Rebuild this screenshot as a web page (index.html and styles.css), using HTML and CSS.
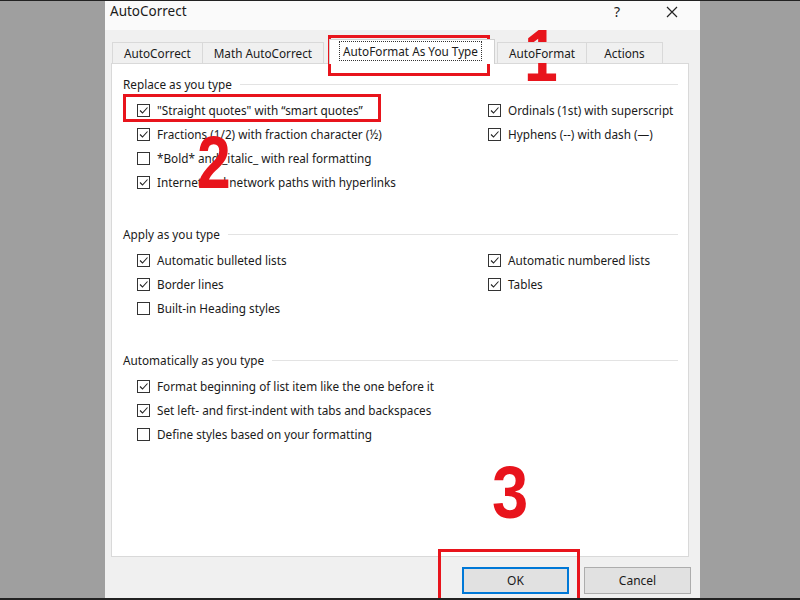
FILE: index.html
```html
<!DOCTYPE html>
<html lang="en">
<head>
    <meta charset="UTF-8">
    <meta name="viewport" content="width=device-width, initial-scale=1.0">
    <title>AutoCorrect</title>
    <link rel="stylesheet" href="styles.css">
</head>
<body>

    <div class="screen">
        <div class="dialog">
            <div class="titlebar">
                <span class="title">AutoCorrect</span>
                <span class="tb-help">?</span>
                <span class="tb-close">
                    <svg width="12" height="12" viewBox="0 0 12 12"><path d="M1 1 L11 11 M11 1 L1 11" stroke="#222" stroke-width="1.2" fill="none"/></svg>
                </span>
            </div>

            <div class="tabs">
                <div class="tab">AutoCorrect</div>
                <div class="tab">Math AutoCorrect</div>
                <div class="tab active"><span class="focus">AutoFormat As You Type</span></div>
                <div class="tab">AutoFormat</div>
                <div class="tab">Actions</div>
            </div>

            <div class="panel">
                <div class="group">
                    <div class="legend"><span>Replace as you type</span></div>
                    <div class="opts">
                        <div class="col">
                            <div class="opt"><span class="cb"><svg viewBox="0 0 11 11"><path d="M2 5.5 L4.5 8 L9.5 2.5"/></svg></span>"Straight quotes" with “smart quotes”</div>
                            <div class="opt"><span class="cb"><svg viewBox="0 0 11 11"><path d="M2 5.5 L4.5 8 L9.5 2.5"/></svg></span>Fractions (1/2) with fraction character (½)</div>
                            <div class="opt"><span class="cb"></span>*Bold* and _italic_ with real formatting</div>
                            <div class="opt"><span class="cb"><svg viewBox="0 0 11 11"><path d="M2 5.5 L4.5 8 L9.5 2.5"/></svg></span>Internet and network paths with hyperlinks</div>
                        </div>
                        <div class="col">
                            <div class="opt"><span class="cb"><svg viewBox="0 0 11 11"><path d="M2 5.5 L4.5 8 L9.5 2.5"/></svg></span>Ordinals (1st) with superscript</div>
                            <div class="opt"><span class="cb"><svg viewBox="0 0 11 11"><path d="M2 5.5 L4.5 8 L9.5 2.5"/></svg></span>Hyphens (--) with dash (—)</div>
                        </div>
                    </div>
                </div>

                <div class="group">
                    <div class="legend"><span>Apply as you type</span></div>
                    <div class="opts">
                        <div class="col">
                            <div class="opt"><span class="cb"><svg viewBox="0 0 11 11"><path d="M2 5.5 L4.5 8 L9.5 2.5"/></svg></span>Automatic bulleted lists</div>
                            <div class="opt"><span class="cb"><svg viewBox="0 0 11 11"><path d="M2 5.5 L4.5 8 L9.5 2.5"/></svg></span>Border lines</div>
                            <div class="opt"><span class="cb"></span>Built-in Heading styles</div>
                        </div>
                        <div class="col">
                            <div class="opt"><span class="cb"><svg viewBox="0 0 11 11"><path d="M2 5.5 L4.5 8 L9.5 2.5"/></svg></span>Automatic numbered lists</div>
                            <div class="opt"><span class="cb"><svg viewBox="0 0 11 11"><path d="M2 5.5 L4.5 8 L9.5 2.5"/></svg></span>Tables</div>
                        </div>
                    </div>
                </div>

                <div class="group">
                    <div class="legend"><span>Automatically as you type</span></div>
                    <div class="opts">
                        <div class="col">
                            <div class="opt"><span class="cb"><svg viewBox="0 0 11 11"><path d="M2 5.5 L4.5 8 L9.5 2.5"/></svg></span>Format beginning of list item like the one before it</div>
                            <div class="opt"><span class="cb"><svg viewBox="0 0 11 11"><path d="M2 5.5 L4.5 8 L9.5 2.5"/></svg></span>Set left- and first-indent with tabs and backspaces</div>
                            <div class="opt"><span class="cb"></span>Define styles based on your formatting</div>
                        </div>
                    </div>
                </div>
            </div>

            <div class="footer">
                <button class="btn btn-ok">OK</button>
                <button class="btn">Cancel</button>
            </div>
        </div>

        <!-- annotation marks -->
        <div class="mark box-1"></div>
        <div class="mark box-2"></div>
        <div class="mark box-3"></div>
        <div class="num num-1">1</div>
        <div class="num num-2">2</div>
        <div class="num num-3">3</div>
    </div>

</body>
</html>
```

FILE: styles.css
```css
body {
    margin: 0;
    background-color: #9f9f9f;
    font-family: "Noto Sans", "Open Sans", sans-serif;
    font-size: 11.75px;
    color: #1a1a1a;
}
.screen {
    position: relative;
    width: 800px;
    height: 600px;
    overflow: hidden;
    border-top: 1px solid #222;
    border-bottom: 2px solid #222;
    box-sizing: border-box;
}
.dialog {
    width: 595px;
    height: 100%;
    margin-left: 105px;
    background: #f0f0f0;
    display: flex;
    flex-direction: column;
}
.titlebar {
    height: 29px;
    background: #fafafa;
    display: flex;
    align-items: center;
    padding-left: 5px;
}
.title {
    font-size: 13.5px;
    flex: 1;
    margin-top: -9px;
}
.tb-help {
    font-size: 14px;
    margin-top: -9px;
    margin-right: 46px;
}
.tb-close {
    height: 12px;
    margin-top: -9px;
    margin-right: 22px;
}
.tabs {
    display: flex;
    align-items: flex-end;
    height: 33px;
    padding-left: 7px;
    position: relative;
    z-index: 1;
}
.tab {
    height: 21px;
    line-height: 20px;
    padding: 0 11px;
    min-width: 77px;
    text-align: center;
    border: 1px solid #d9d9d9;
    border-bottom: none;
    margin-right: -1px;
    box-sizing: border-box;
    background: #f0f0f0;
}
.tab.active {
    height: 25px;
    line-height: 22px;
    background: #fff;
    padding: 0 12px 0 9px;
    margin: 0 2px -1px 6px;
    border-color: #d0d0d0;
}
.focus {
    border: 1px dotted #333;
    padding: 1px 3px;
}
.panel {
    height: 494px;
    margin-left: 6px;
    width: 578px;
    background: #fff;
    border: 1px solid #d9d9d9;
    box-sizing: border-box;
    padding: 12px 10px 0 11px;
}
.group {
    margin-bottom: 32px;
}
.legend {
    display: flex;
    align-items: center;
    height: 16px;
    margin-bottom: 6px;
}
.legend::after {
    content: "";
    flex: 1;
    border-top: 1px solid #e3e3e3;
    margin-left: 8px;
}
.opts {
    display: grid;
    grid-template-columns: 351px 1fr;
    padding-left: 14px;
}
.opt {
    height: 24px;
    display: flex;
    align-items: center;
    white-space: nowrap;
}
.cb {
    width: 13px;
    height: 13px;
    border: 1px solid #333;
    box-sizing: border-box;
    margin-right: 7px;
    background: #fff;
    flex-shrink: 0;
}
.cb svg {
    display: block;
    width: 11px;
    height: 11px;
    fill: none;
    stroke: #222;
    stroke-width: 1.1;
}
.footer {
    display: flex;
    justify-content: flex-end;
    gap: 15px;
    padding: 10px 9px 0 0;
}
.btn {
    width: 107px;
    height: 27px;
    background: #e1e1e1;
    border: 1px solid #adadad;
    font-family: "Noto Sans", "Open Sans", sans-serif;
    font-size: 12px;
    color: #1a1a1a;
}
.btn-ok {
    border: 2px solid #0078d7;
}
.mark {
    position: absolute;
    border: 3px solid #e8141c;
    box-sizing: border-box;
}
.box-1 {
    left: 328px;
    top: 34px;
    width: 162px;
    height: 41px;
}
.box-2 {
    left: 123px;
    top: 93px;
    width: 258px;
    height: 28px;
}
.box-3 {
    left: 438px;
    top: 548px;
    width: 142px;
    height: 52px;
}
.num {
    position: absolute;
    font-family: "Liberation Sans", Arial, sans-serif;
    font-weight: bold;
    font-size: 74px;
    color: #e8141c;
    line-height: 1;
    transform: scaleX(0.82);
    transform-origin: left top;
}
.num-1 {
    left: 524px;
    top: 18px;
}
.num-2 {
    left: 197px;
    top: 125px;
}
.num-3 {
    left: 492px;
    top: 455px;
    transform: scaleX(0.88);
}
```
